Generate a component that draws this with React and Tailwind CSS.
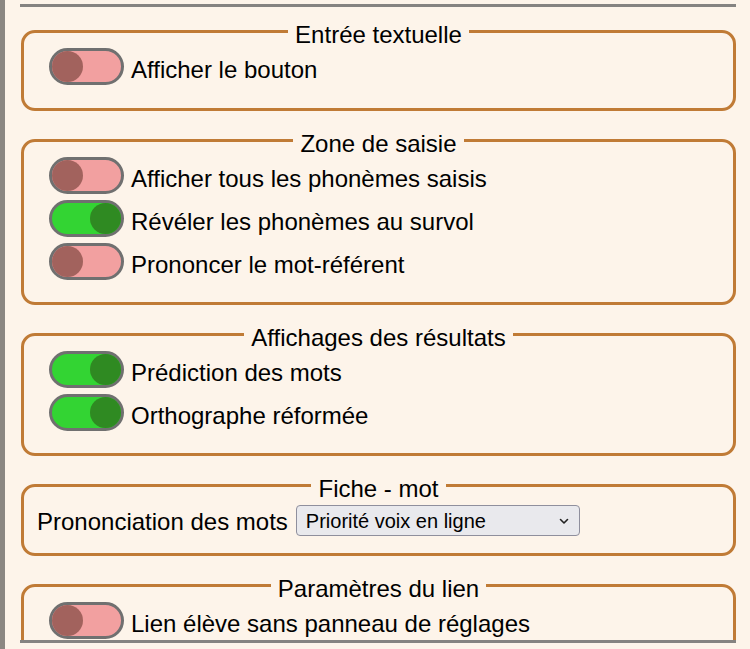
import { useState } from "react";

function Toggle({ on, onClick }) {
  return (
    <button
      type="button"
      onClick={onClick}
      className={`flex h-[37px] w-[75px] shrink-0 rounded-full border-[3px] border-[#707070] ${on ? "justify-end bg-[#33d433]" : "justify-start bg-[#f2a0a0]"}`}
    >
      <span className={`h-[31px] w-[31px] rounded-full ${on ? "bg-[#2f8a22]" : "bg-[#a2625d]"}`} />
    </button>
  );
}

function Section({ title, children, className = "" }) {
  return (
    <fieldset className="ml-px rounded-[14px] border-[3px] border-[#c07b36]">
      <legend className="mx-auto px-[7px] pt-[6px] leading-[21px]">{title}</legend>
      <div className={className}>{children}</div>
    </fieldset>
  );
}

function Row({ label, on, onClick }) {
  return (
    <div className="flex items-center gap-[7px]">
      <Toggle on={on} onClick={onClick} />
      <span className="pt-[6px] leading-[27px]">{label}</span>
    </div>
  );
}

export default function App() {
  const [opts, setOpts] = useState({
    bouton: false,
    tous: false,
    survol: true,
    referent: false,
    prediction: true,
    ortho: true,
    lien: false,
  });
  const flip = (k) => setOpts({ ...opts, [k]: !opts[k] });

  return (
    <div className="flex h-[649px] w-[750px] overflow-hidden bg-[#fdf4ea] text-[24px] text-black" style={{ fontFamily: '"Liberation Sans", Arial, sans-serif' }}>
      <div className="w-[5px] shrink-0 bg-[#8b8782]" />
      <div className="ml-[15px] mt-[4px] flex h-[639px] w-[716px] flex-col overflow-hidden border-y-[3px] border-[#858381]">
        <div className="mt-[11px] flex flex-col gap-[16px]">
          <Section title="Entrée textuelle" className="pb-[23px] pl-[25px] pt-[3px]">
            <Row label="Afficher le bouton" on={opts.bouton} onClick={() => flip("bouton")} />
          </Section>

          <Section title="Zone de saisie" className="flex flex-col gap-[6px] pb-[22px] pl-[25px] pt-[3px]">
            <Row label="Afficher tous les phonèmes saisis" on={opts.tous} onClick={() => flip("tous")} />
            <Row label="Révéler les phonèmes au survol" on={opts.survol} onClick={() => flip("survol")} />
            <Row label="Prononcer le mot-référent" on={opts.referent} onClick={() => flip("referent")} />
          </Section>

          <Section title="Affichages des résultats" className="flex flex-col gap-[6px] pb-[22px] pl-[25px] pt-[3px]">
            <Row label="Prédiction des mots" on={opts.prediction} onClick={() => flip("prediction")} />
            <Row label="Orthographe réformée" on={opts.ortho} onClick={() => flip("ortho")} />
          </Section>

          <Section title="Fiche - mot" className="flex items-center gap-[8px] pb-[17px] pl-[13px] pt-[2px]">
            <span className="pt-[6px] leading-[27px]">Prononciation des mots</span>
            <div className="relative mt-[4px] flex h-[31px] w-[284px] items-center rounded-[4px] border border-[#8f8f9d] bg-[#e9e9ed] pl-[9px] text-[20px]">
              <span>Priorité voix en ligne</span>
              <svg className="absolute right-[10px] top-[12px]" width="10" height="7" viewBox="0 0 10 7" fill="none">
                <path d="M1.5 1.5 L5 5 L8.5 1.5" stroke="#222" strokeWidth="1.6" strokeLinecap="round" strokeLinejoin="round" />
              </svg>
            </div>
          </Section>

          <Section title="Paramètres du lien" className="flex flex-col gap-[6px] pb-[22px] pl-[25px] pt-[3px]">
            <Row label="Lien élève sans panneau de réglages" on={opts.lien} onClick={() => flip("lien")} />
          </Section>
        </div>
      </div>
    </div>
  );
}
